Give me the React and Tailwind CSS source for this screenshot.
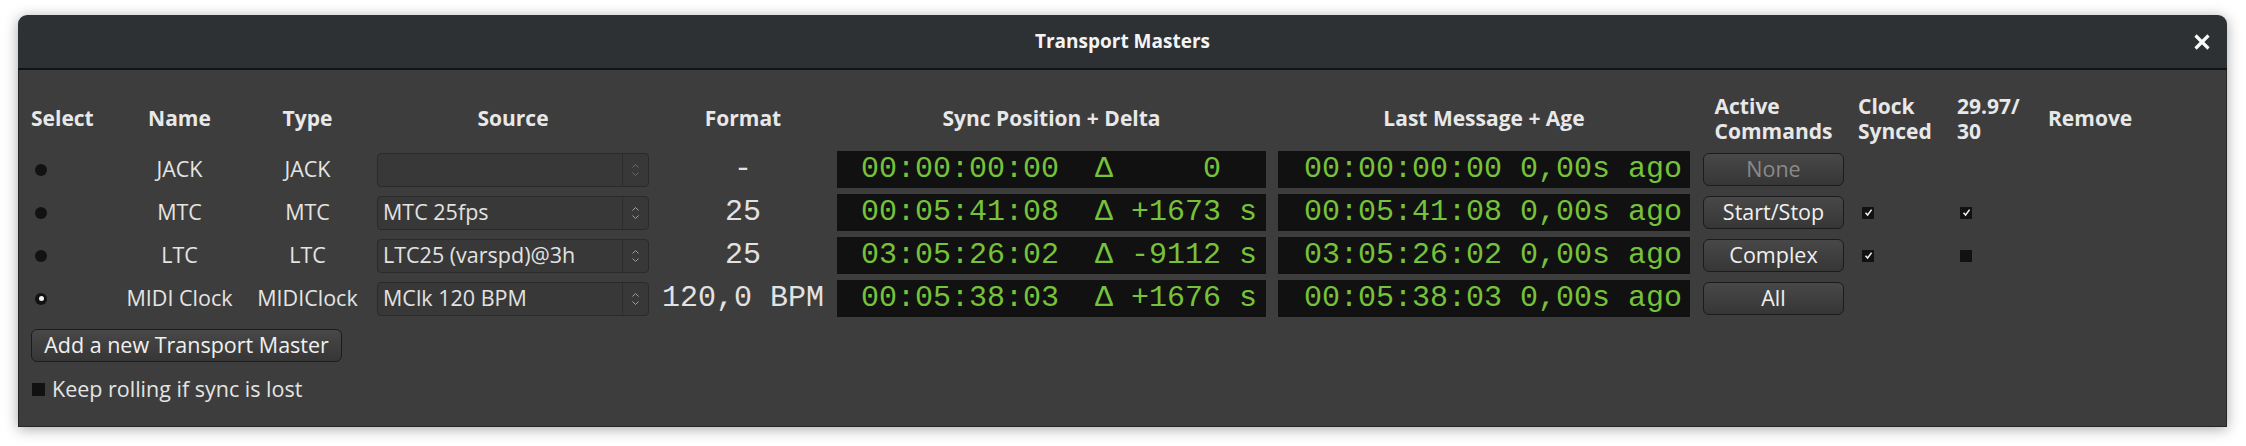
import React from "react";

const rows = [
  { name: "JACK", type: "JACK", source: "", disabled: true, format: "-", sync: "00:00:00:00  Δ     0  ", last: "00:00:00:00 0,00s ago", cmd: "None", cmdDisabled: true, clock: null, fps: null, selected: false },
  { name: "MTC", type: "MTC", source: "MTC 25fps", format: "25", sync: "00:05:41:08  Δ +1673 s", last: "00:05:41:08 0,00s ago", cmd: "Start/Stop", clock: true, fps: true, selected: false },
  { name: "LTC", type: "LTC", source: "LTC25 (varspd)@3h", format: "25", sync: "03:05:26:02  Δ -9112 s", last: "03:05:26:02 0,00s ago", cmd: "Complex", clock: true, fps: false, selected: false },
  { name: "MIDI Clock", type: "MIDIClock", source: "MClk 120 BPM", format: "120,0 BPM", sync: "00:05:38:03  Δ +1676 s", last: "00:05:38:03 0,00s ago", cmd: "All", clock: null, fps: null, selected: true },
];

const mono = "[font-family:'Liberation_Mono',monospace]";

function Radio({ on }) {
  return (
    <div className="ml-[4px] w-[12px] h-[12px] rounded-full bg-[#121212] flex items-center justify-center">
      {on && <div className="w-[5px] h-[5px] rounded-full bg-[#f0f0f0]" />}
    </div>
  );
}

function Check({ on }) {
  return (
    <div className="w-[12px] h-[12px] bg-[#111] rounded-[1px] flex items-center justify-center">
      {on && (
        <svg width="9" height="9" viewBox="0 0 9 9">
          <polyline points="1.5,4.8 3.6,7 7.6,1.6" fill="none" stroke="#f2f2f2" strokeWidth="1.5" />
        </svg>
      )}
    </div>
  );
}

function Combo({ text, disabled }) {
  const c = disabled ? "#6a6a6a" : "#a0a0a0";
  return (
    <div className="justify-self-end w-[272px] h-[34px] rounded-[4px] border border-[#2a2a2a] bg-[#383838] flex items-center">
      <div className="flex-1 pl-[5px] text-[#e2e2e2] whitespace-nowrap">{text}</div>
      <div className="h-full border-l border-[#2c2c2c] w-[26px] flex items-center justify-center">
        <svg width="9" height="16" viewBox="0 0 9 16">
          <polyline points="1.5,5.5 4.5,2.5 7.5,5.5" fill="none" stroke={c} strokeWidth="1" />
          <polyline points="1.5,10.5 4.5,13.5 7.5,10.5" fill="none" stroke={c} strokeWidth="1" />
        </svg>
      </div>
    </div>
  );
}

function Button({ children, disabled, className = "" }) {
  return (
    <div className={`h-[33px] rounded-[6px] border border-[#1b1b1b] bg-gradient-to-b from-[#484848] to-[#363636] flex items-center justify-center ${disabled ? "text-[#8a8a8a]" : "text-[#f0f0f0]"} ${className}`}>
      {children}
    </div>
  );
}

export default function App() {
  return (
    <div className="w-[2246px] h-[446px] bg-white overflow-hidden pt-[15px] pl-[18px] [font-family:'Open_Sans',sans-serif]">
      <div className="w-[2209px] h-[412px] rounded-t-[9px] shadow-[0_2px_14px_rgba(0,0,0,0.35)] flex flex-col">
        <div className="h-[53px] bg-[#2e3134] rounded-t-[9px] flex items-center justify-center relative">
          <span className="text-[19px] font-bold text-[#f4f4f4]">Transport Masters</span>
          <svg className="absolute right-[16px] top-[18px]" width="18" height="18" viewBox="0 0 18 18">
            <line x1="2.5" y1="2.5" x2="15.5" y2="15.5" stroke="#fafafa" strokeWidth="3.2" />
            <line x1="15.5" y1="2.5" x2="2.5" y2="15.5" stroke="#fafafa" strokeWidth="3.2" />
          </svg>
        </div>
        <div className="h-[2px] bg-[#131313]" />
        <div className="flex-1 bg-[#3d3d3d] border-x border-b border-[#262626] pl-[12px] pt-[20px] text-[21.5px] text-[#e4e4e4]">
          <div className="grid grid-cols-[79px_139px_117px_283px_188px_429px_424px_154px_100px_90px_100px] grid-rows-[58px_repeat(4,43px)] items-center">
            <div className="font-bold text-[21px] text-[#e8e8e8]">Select</div>
            <div className="font-bold text-[21px] text-[#e8e8e8] text-center">Name</div>
            <div className="font-bold text-[21px] text-[#e8e8e8] text-center">Type</div>
            <div className="font-bold text-[21px] text-[#e8e8e8] text-center pl-[11px]">Source</div>
            <div className="font-bold text-[21px] text-[#e8e8e8] text-center">Format</div>
            <div className="font-bold text-[21px] text-[#e8e8e8] text-center">Sync Position + Delta</div>
            <div className="font-bold text-[21px] text-[#e8e8e8] text-center pl-[12px]">Last Message + Age</div>
            <div className="font-bold text-[21px] text-[#e8e8e8] pl-[13px] flex justify-center">
              <div className="leading-[25px]">Active<br />Commands</div>
            </div>
            <div className="font-bold text-[21px] text-[#e8e8e8] pl-[14px] leading-[25px]">Clock<br />Synced</div>
            <div className="font-bold text-[21px] text-[#e8e8e8] pl-[13px] leading-[25px]">29.97/<br />30</div>
            <div className="font-bold text-[21px] text-[#e8e8e8] pl-[14px]">Remove</div>

            {rows.map((r, i) => (
              <React.Fragment key={i}>
                <div><Radio on={r.selected} /></div>
                <div className="text-center whitespace-nowrap">{r.name}</div>
                <div className="text-center whitespace-nowrap">{r.type}</div>
                <Combo text={r.source} disabled={r.disabled} />
                <div className={`text-center text-[30px] text-[#e2e2e2] whitespace-pre ${mono}`}>{r.format}</div>
                <div className={`h-[37px] bg-[#111111] text-right pr-[9px] text-[30px] leading-[37px] text-[#76c23a] whitespace-pre ${mono}`}>{r.sync}</div>
                <div className={`justify-self-end w-[412px] h-[37px] bg-[#111111] text-right pr-[8px] text-[30px] leading-[37px] text-[#76c23a] whitespace-pre ${mono}`}>{r.last}</div>
                <Button disabled={r.cmdDisabled} className="justify-self-end w-[141px]">{r.cmd}</Button>
                <div className="pl-[18px]">{r.clock !== null && <Check on={r.clock} />}</div>
                <div className="pl-[16px]">{r.fps !== null && <Check on={r.fps} />}</div>
                <div />
              </React.Fragment>
            ))}
          </div>
          <Button className="mt-[9px] w-[311px]">Add a new Transport Master</Button>
          <div className="mt-[13px] h-[28px] flex items-center">
            <div className="ml-[1px] w-[13px] h-[13px] bg-[#111]" />
            <span className="ml-[7px]">Keep rolling if sync is lost</span>
          </div>
        </div>
      </div>
    </div>
  );
}
